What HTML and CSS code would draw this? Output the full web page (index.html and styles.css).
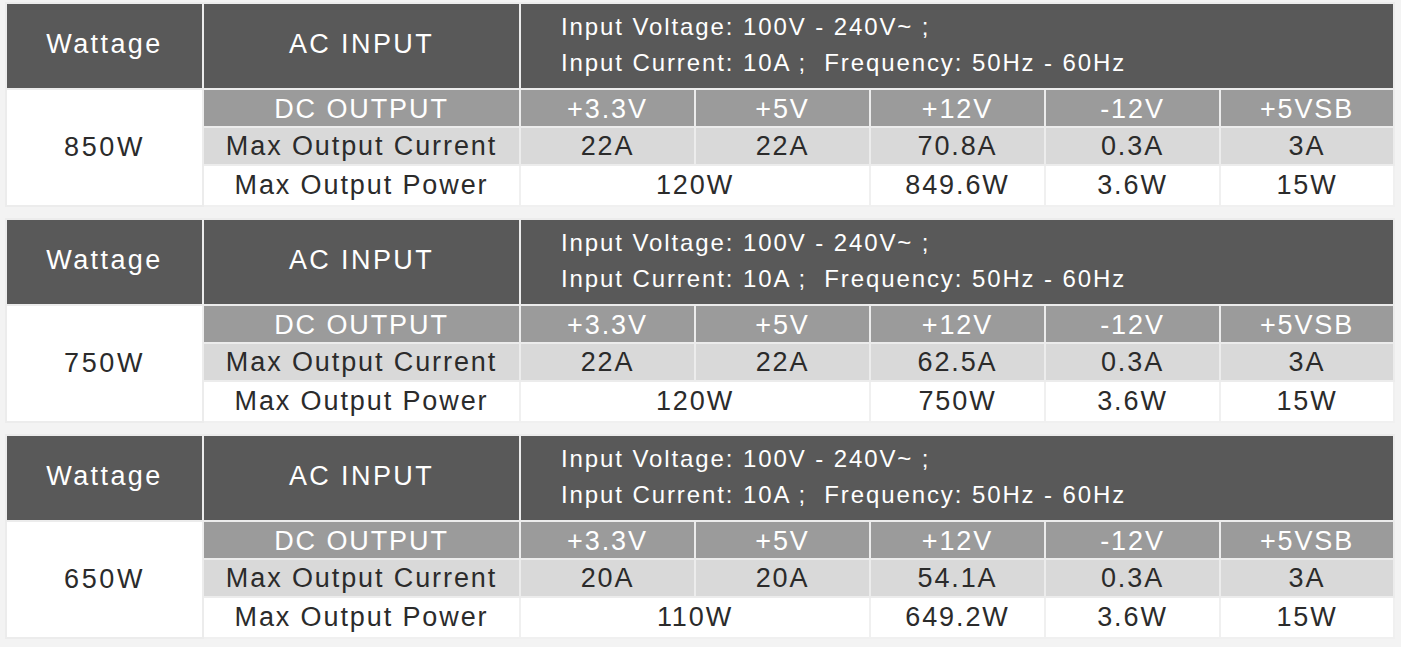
FILE: index.html
```html
<!DOCTYPE html>
<html>
<head>
<meta charset="utf-8">
<link rel="stylesheet" href="styles.css">
</head>
<body>
<div class="page">
  <table class="spec">
    <colgroup><col class="c-w"><col class="c-ac"><col class="c-v"><col class="c-v"><col class="c-v"><col class="c-v"><col class="c-last"></colgroup>
    <tr class="r-head">
      <td class="head-cell">Wattage</td>
      <td class="head-cell">AC INPUT</td>
      <td class="input-cell" colspan="5">Input Voltage: 100V - 240V~ ;<br>Input Current: 10A ;&nbsp; Frequency: 50Hz - 60Hz</td>
    </tr>
    <tr class="r-dc">
      <td class="watt" rowspan="3">850W</td>
      <td>DC OUTPUT</td><td>+3.3V</td><td>+5V</td><td>+12V</td><td>-12V</td><td>+5VSB</td>
    </tr>
    <tr class="r-cur">
      <td>Max Output Current</td><td>22A</td><td>22A</td><td>70.8A</td><td>0.3A</td><td>3A</td>
    </tr>
    <tr class="r-pow">
      <td>Max Output Power</td><td colspan="2">120W</td><td>849.6W</td><td>3.6W</td><td>15W</td>
    </tr>
  </table>

  <table class="spec">
    <colgroup><col class="c-w"><col class="c-ac"><col class="c-v"><col class="c-v"><col class="c-v"><col class="c-v"><col class="c-last"></colgroup>
    <tr class="r-head">
      <td class="head-cell">Wattage</td>
      <td class="head-cell">AC INPUT</td>
      <td class="input-cell" colspan="5">Input Voltage: 100V - 240V~ ;<br>Input Current: 10A ;&nbsp; Frequency: 50Hz - 60Hz</td>
    </tr>
    <tr class="r-dc">
      <td class="watt" rowspan="3">750W</td>
      <td>DC OUTPUT</td><td>+3.3V</td><td>+5V</td><td>+12V</td><td>-12V</td><td>+5VSB</td>
    </tr>
    <tr class="r-cur">
      <td>Max Output Current</td><td>22A</td><td>22A</td><td>62.5A</td><td>0.3A</td><td>3A</td>
    </tr>
    <tr class="r-pow">
      <td>Max Output Power</td><td colspan="2">120W</td><td>750W</td><td>3.6W</td><td>15W</td>
    </tr>
  </table>

  <table class="spec">
    <colgroup><col class="c-w"><col class="c-ac"><col class="c-v"><col class="c-v"><col class="c-v"><col class="c-v"><col class="c-last"></colgroup>
    <tr class="r-head">
      <td class="head-cell">Wattage</td>
      <td class="head-cell">AC INPUT</td>
      <td class="input-cell" colspan="5">Input Voltage: 100V - 240V~ ;<br>Input Current: 10A ;&nbsp; Frequency: 50Hz - 60Hz</td>
    </tr>
    <tr class="r-dc">
      <td class="watt" rowspan="3">650W</td>
      <td>DC OUTPUT</td><td>+3.3V</td><td>+5V</td><td>+12V</td><td>-12V</td><td>+5VSB</td>
    </tr>
    <tr class="r-cur">
      <td>Max Output Current</td><td>20A</td><td>20A</td><td>54.1A</td><td>0.3A</td><td>3A</td>
    </tr>
    <tr class="r-pow">
      <td>Max Output Power</td><td colspan="2">110W</td><td>649.2W</td><td>3.6W</td><td>15W</td>
    </tr>
  </table>
</div>
</body>
</html>
```

FILE: styles.css
```css
html, body {
  margin: 0;
  padding: 0;
  background: #f3f3f3;
}
.page {
  padding: 2px 0 0 5px;
  display: flex;
  flex-direction: column;
  gap: 11px;
}
.spec {
  width: 1388px;
  table-layout: fixed;
  border-collapse: collapse;
  font-family: "Liberation Sans", Arial, sans-serif;
  font-size: 27px;
  letter-spacing: 1.9px;
  color: #2b2b2b;
}
.c-w { width: 197px; }
.c-ac { width: 317px; }
.c-v { width: 175px; }
.c-last { width: 174px; }
.spec td {
  border: 2px solid #ececec;
  padding: 0;
  text-align: center;
  line-height: 1;
  white-space: nowrap;
}
.r-head td {
  background: #595959;
  color: #ffffff;
  height: 79px;
}
.r-head .head-cell {
  padding-bottom: 4px;
  letter-spacing: 2.4px;
}
.r-head .input-cell {
  text-align: left;
  padding-left: 40px;
  padding-top: 1px;
  padding-bottom: 4px;
  font-size: 24px;
  line-height: 36px;
  letter-spacing: 1.9px;
}
.r-dc td {
  background: #9b9b9b;
  color: #ffffff;
  height: 33px;
  padding-top: 3px;
}
.r-cur td {
  background: #d9d9d9;
  height: 36px;
}
.r-pow td {
  background: #ffffff;
  height: 39px;
  border-color: #f0f0f0;
}
.spec td.watt {
  background: #ffffff;
  color: #2b2b2b;
  padding-top: 0;
  letter-spacing: 2.6px;
}
```
